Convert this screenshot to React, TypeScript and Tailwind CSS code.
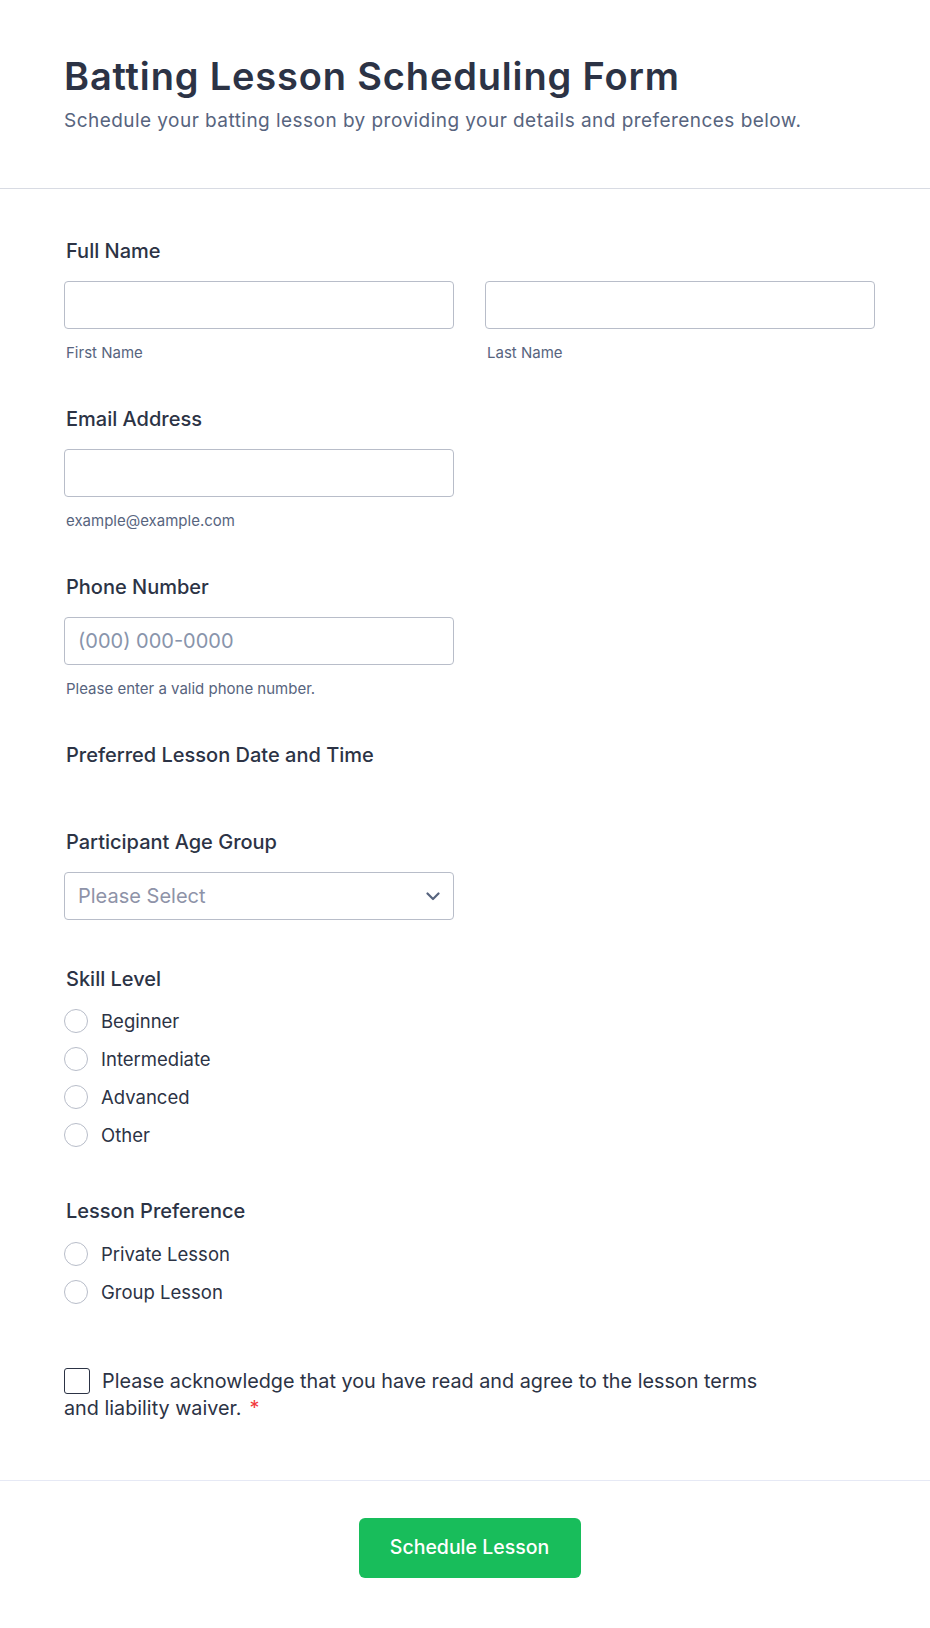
import React from "react";

const sub = "mt-[14px] pl-[2px] text-[15px] leading-5 text-[#57647e]";
const label = "pl-[2px] text-[20px] leading-7 font-medium text-[#2c3345]";
const input =
  "block h-12 w-full rounded border border-[#b8bdc9] bg-white px-[13px] text-[20px] text-[#2c3345] placeholder:text-[#8894ab] outline-none";

function Radio({ text }: { text: string }) {
  return (
    <label className="flex h-[38px] items-center gap-[13px]">
      <span className="h-6 w-6 shrink-0 rounded-full border border-[#b8bdc9] bg-white" />
      <span className="text-[18.5px] leading-[38px] text-[#2c3345]">{text}</span>
    </label>
  );
}

export default function App() {
  return (
    <div className="min-h-[1628px] bg-white font-['Inter',sans-serif]">
      <header className="border-b border-[#d8dbe3] pb-[54px] pl-16 pr-[55px] pt-[54px]">
        <h1 className="text-[38px] font-semibold leading-[44px] tracking-[0.022em] text-[#2c3345]">
          Batting Lesson Scheduling Form
        </h1>
        <p className="mt-[10px] text-[19px] leading-[26px] tracking-[0.024em] text-[#57647e]">
          Schedule your batting lesson by providing your details and preferences below.
        </p>
      </header>

      <form className="pl-16 pr-[55px] pt-[48px] pb-[58px]">
        <div className={label}>Full Name</div>
        <div className="mt-4 grid grid-cols-2 gap-[31px]">
          <div>
            <input className={input} />
            <div className={sub}>First Name</div>
          </div>
          <div>
            <input className={input} />
            <div className={sub}>Last Name</div>
          </div>
        </div>

        <div className={`${label} mt-[42px]`}>Email Address</div>
        <div className="mt-4 w-[390px]">
          <input className={input} />
          <div className={sub}>example@example.com</div>
        </div>

        <div className={`${label} mt-[42px]`}>Phone Number</div>
        <div className="mt-4 w-[390px]">
          <input className={input} placeholder="(000) 000-0000" />
          <div className={sub}>Please enter a valid phone number.</div>
        </div>

        <div className={`${label} mt-[42px]`}>Preferred Lesson Date and Time</div>

        <div className={`${label} mt-[59px]`}>Participant Age Group</div>
        <div className="mt-4 flex h-12 w-[390px] items-center justify-between rounded border border-[#b8bdc9] bg-white pl-[13px] pr-[13px]">
          <span className="text-[20px] text-[#8e93a8]">Please Select</span>
          <svg width="14" height="9" viewBox="0 0 14 9" fill="none">
            <path d="M1.5 1.5l5.5 5.5 5.5-5.5" stroke="#57647e" strokeWidth="2.2" strokeLinecap="round" strokeLinejoin="round" />
          </svg>
        </div>

        <div className={`${label} mt-[45px]`}>Skill Level</div>
        <div className="mt-[9px]">
          <Radio text="Beginner" />
          <Radio text="Intermediate" />
          <Radio text="Advanced" />
          <Radio text="Other" />
        </div>

        <div className={`${label} mt-[43px]`}>Lesson Preference</div>
        <div className="mt-[10px]">
          <Radio text="Private Lesson" />
          <Radio text="Group Lesson" />
        </div>

        <p className="mt-[57px] max-w-[725px] text-[19.8px] leading-[27px] text-[#2c3345]">
          <span className="mr-3 inline-block h-[26px] w-[26px] rounded-[3px] border-[1.5px] border-[#2c3345] align-[-6px]" />
          Please acknowledge that you have read and agree to the lesson terms and liability waiver.
          <span className="ml-2 text-[#f23a3c]">*</span>
        </p>
      </form>

      <footer className="border-t border-[#e6e9f5] pl-16 pr-[55px] pb-[50px] pt-[37px]">
        <div className="flex justify-center">
          <button className="h-[60px] w-[222px] rounded-md bg-[#18bd5b] text-[19.5px] font-medium text-white">
            Schedule Lesson
          </button>
        </div>
      </footer>
    </div>
  );
}
